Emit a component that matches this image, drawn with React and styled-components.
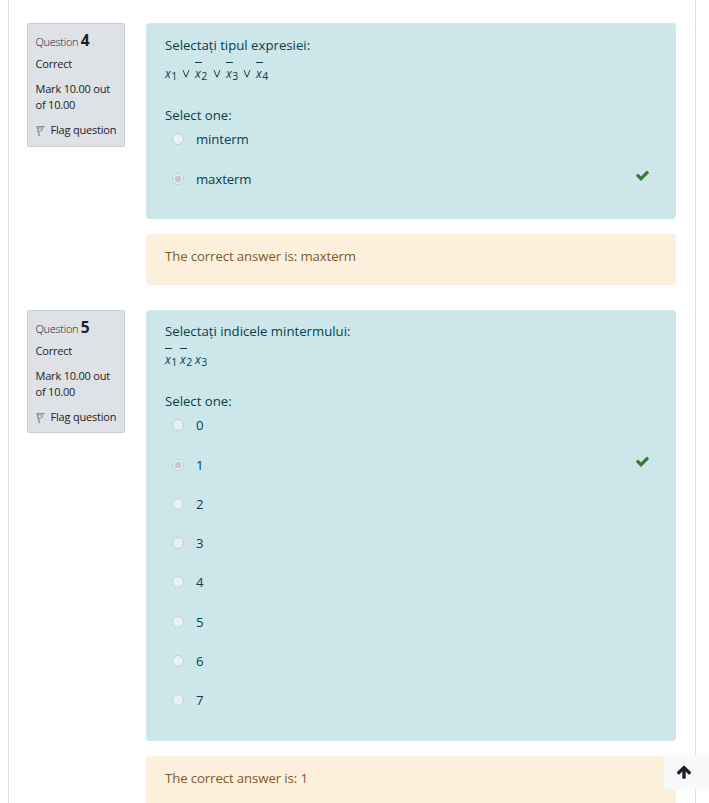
import React from "react";
import styled, { createGlobalStyle } from "styled-components";

const GlobalStyle = createGlobalStyle`
  *, *::before, *::after { box-sizing: border-box; }
  html, body { margin: 0; height: 803px; overflow: hidden; background: #fff; }
  body { font-family: "Open Sans", "Noto Sans", sans-serif; font-size: 13.2px; color: #1d2125; }
`;

const Page = styled.main`
  width: 688px;
  height: 803px;
  margin-left: 8px;
  padding: 23px 19px 0 18px;
  overflow: hidden;
  border: solid #dcdddf;
  border-width: 0 1px;
`;

const Question = styled.section`
  display: grid;
  grid-template-columns: 98px 530px;
  column-gap: 21px;
  align-items: start;
  margin-bottom: 25px;
`;

const Info = styled.aside`
  height: ${(p) => p.$height}px;
  padding: 7px 0 0 7.5px;
  border: 1px solid #c7ced5;
  border-radius: 2px;
  background: #dee2e6;
  font-size: 11px;
  line-height: 16.4px;
  letter-spacing: -0.2px;
  white-space: nowrap;
`;

const Heading = styled.h3`
  margin: 0 0 7px;
  height: 18px;
  line-height: 18px;
  font-size: 11px;
  font-weight: 300;
  letter-spacing: -0.3px;
`;

const Number = styled.span`
  font-size: 15.5px;
  font-weight: 700;
`;

const InfoLine = styled.div`
  margin-bottom: 8.4px;
`;

const FlagLink = styled.div`
  display: flex;
  align-items: center;
  gap: 6px;
  svg { width: 9px; height: 12px; margin-top: 1px; }
`;

const Formulation = styled.div`
  height: ${(p) => p.$height}px;
  padding: ${(p) => p.$top}px 19px 0;
  border-radius: 4px;
  background: #cde6e9;
  color: #04414d;
`;

const Prompt = styled.div`
  height: 20px;
  line-height: 20px;
`;

const Formula = styled.div`
  display: flex;
  height: 24px;
  margin: 5px 0 21px;
  padding-top: 5px;
  font-size: 12px;
  line-height: 20px;
`;

const Variable = styled.span`
  width: ${(p) => p.$width}px;
  height: 23px;
  margin-top: -4px;
  padding-top: 3px;
  white-space: nowrap;
  background: ${(p) => (p.$bar ? "linear-gradient(#04414d, #04414d) 0 1px / 7px 1px no-repeat" : "none")};
  i { letter-spacing: 0.4px; }
  sub { font-size: 10.5px; line-height: 0; vertical-align: -2px; }
`;

const Operator = styled.svg`
  width: 8px;
  height: 8px;
  margin: 5px 5px 0 0;
  flex: none;
`;

const Options = styled.div`
  padding-left: 7px;
  margin-top: 4.4px;
`;

const Option = styled.label`
  display: flex;
  align-items: center;
  height: 20px;
  margin-bottom: 19.25px;
  letter-spacing: -0.1px;
`;

const Radio = styled.span`
  display: flex;
  width: 12px;
  height: 12px;
  margin-right: 12px;
  border: 1px solid #c7cfd1;
  border-radius: 50%;
  background: ${(p) => (p.$checked ? "radial-gradient(circle, #c3caca 0 3px, #e7f0f1 3.8px)" : "#e8f1f2")};
`;

const Check = styled.svg`
  width: 15px;
  height: 15px;
  margin: -6px 7px 0 auto;
  fill: #357a32;
`;

const Feedback = styled.div`
  grid-column: 2;
  height: 51px;
  margin-top: 15px;
  padding: 12px 19px;
  border-radius: 4px;
  background: #fcefdc;
  color: #7d5a29;
  line-height: 20px;
  letter-spacing: -0.1px;
`;

const ToTop = styled.button`
  position: fixed;
  right: 0;
  top: 755px;
  width: 45px;
  height: 34px;
  padding: 0 0 0 12px;
  display: flex;
  align-items: center;
  border: 0;
  border-radius: 4px 0 0 4px;
  background: #f8f9fa;
  svg { display: block; width: 16px; height: 16px; fill: #1d2125; }
`;

const FlagIcon = () => (
  <svg viewBox="0 0 9 12" fill="none" stroke="#8b8e91">
    <path d="M1 1.4L3.5 11.2" strokeWidth="1.4" />
    <path d="M1 1.5H8.2L6.4 3.4V5L3 6.4M2 3H6" strokeWidth="1" />
  </svg>
);

const CheckIcon = () => (
  <Check viewBox="0 0 1792 1792">
    <path d="M1671 566q0 40-28 68l-724 724-136 136q-28 28-68 28t-68-28l-136-136-362-362q-28-28-28-68t28-68l136-136q28-28 68-28t68 28l294 295 656-657q28-28 68-28t68 28l136 136q28 28 28 68z" />
  </Check>
);

const Or = () => (
  <Operator viewBox="0 0 8 8" fill="none" stroke="#04414d">
    <path d="M1 .3L4 7.2L7 .3" />
  </Operator>
);

const Term = ({ n, bar, width }) => (
  <Variable $bar={bar} $width={width}>
    <i>x</i>
    <sub>{n}</sub>
  </Variable>
);

const QuestionBlock = ({ number, infoHeight, height, top, prompt, formula, options, answer }) => (
  <Question>
    <Info $height={infoHeight}>
      <Heading>Question <Number>{number}</Number></Heading>
      <InfoLine>Correct</InfoLine>
      <InfoLine>Mark 10.00 out<br />of 10.00</InfoLine>
      <FlagLink><FlagIcon />Flag question</FlagLink>
    </Info>
    <Formulation $height={height} $top={top}>
      <Prompt>{prompt}</Prompt>
      <Formula>{formula}</Formula>
      <Prompt>Select one:</Prompt>
      <Options>
        {options.map((text) => (
          <Option key={text}>
            <Radio $checked={text === answer} />
            {text}
            {text === answer && <CheckIcon />}
          </Option>
        ))}
      </Options>
    </Formulation>
    <Feedback>The correct answer is: {answer}</Feedback>
  </Question>
);

export default function App() {
  return (
    <>
      <GlobalStyle />
      <Page>
        <QuestionBlock
          number={4}
          infoHeight={124}
          height={196}
          top={12}
          prompt="Selectați tipul expresiei:"
          formula={
            <>
              <Term n={1} width={17} /><Or />
              <Term n={2} bar width={18} /><Or />
              <Term n={3} bar width={17} /><Or />
              <Term n={4} bar width={17} />
            </>
          }
          options={["minterm", "maxterm"]}
          answer="maxterm"
        />
        <QuestionBlock
          number={5}
          infoHeight={123}
          height={431}
          top={11}
          prompt="Selectați indicele mintermului:"
          formula={
            <>
              <Term n={1} bar width={15} />
              <Term n={2} bar width={15} />
              <Term n={3} width={15} />
            </>
          }
          options={["0", "1", "2", "3", "4", "5", "6", "7"]}
          answer="1"
        />
      </Page>
      <ToTop aria-label="Scroll to top">
        <svg viewBox="0 0 1792 1792">
          <path d="M1675 971q0 51-37 90l-75 75q-38 38-91 38-54 0-90-38l-294-293v704q0 52-37.500 84.500t-90.500 32.500h-128q-53 0-90.500-32.500t-37.500-84.500v-704l-294 293q-36 38-90 38t-90-38l-75-75q-38-38-38-90 0-53 38-91l651-651q35-37 90-37 54 0 91 37l651 651q37 39 37 91z" />
        </svg>
      </ToTop>
    </>
  );
}
